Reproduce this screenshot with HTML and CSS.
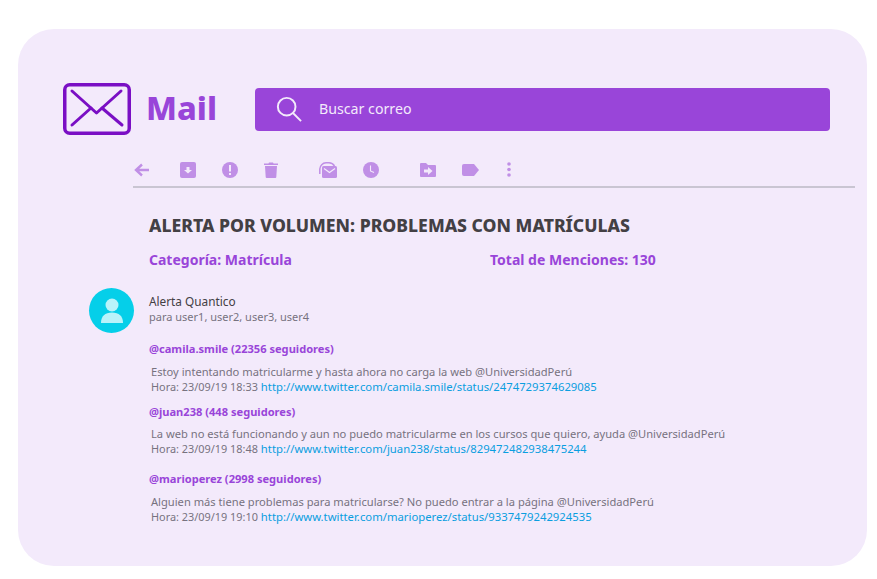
FILE: index.html
```html
<!DOCTYPE html>
<html lang="en">
<head>
    <meta charset="UTF-8">
    <title>Mail</title>
    <link rel="stylesheet" href="styles.css">
</head>
<body>
    <div class="card">
        <header class="top">
            <svg class="logo" width="68" height="52" viewBox="0 0 68 52" fill="none" stroke="#7a0fc4" stroke-width="3" stroke-linecap="round" stroke-linejoin="round">
                <rect x="1.750" y="1.750" width="64.500" height="48.500" rx="5" stroke-width="3.500"/>
                <path d="M9 8 L33.500 30 L58 8"/>
                <path d="M9 42 L28 25"/>
                <path d="M59 42 L39 25"/>
            </svg>
            <div class="brand">Mail</div>
            <div class="search">
                <svg width="26" height="26" viewBox="0 0 28 28" fill="none" stroke="#f3eafb" stroke-width="2.100">
                    <circle cx="11.5" cy="11.5" r="9.500"/>
                    <path d="M18 18 L27 27"/>
                </svg>
                <span>Buscar correo</span>
            </div>
        </header>

        <nav class="toolbar">
            <svg class="back" width="16" height="14" viewBox="0 0 16 14"><path d="M15 7H3M8 1.500L2 7l6 5.500" fill="none" stroke="#c08fe6" stroke-width="2.400"/></svg>
            <svg class="ic-archive" width="16" height="16" viewBox="0 0 16 16"><rect width="16" height="16" rx="2" fill="#c08fe6"/><path d="M6.500 5h3v3H12l-4 3.500L4 8h2.500z" fill="#f3eafb"/></svg>
            <svg class="ic-alert" width="16" height="16" viewBox="0 0 16 16"><circle cx="8" cy="8" r="8" fill="#c08fe6"/><path d="M7 3h2v6.500H7zM7 11h2v2H7z" fill="#f3eafb"/></svg>
            <svg class="ic-trash" width="14" height="16" viewBox="0 0 14 16"><path d="M0 1.500h4.500L5 .500h4l.5 1H14V3H0zM1 4h12l-.7 11a1 1 0 0 1-1 1H2.700a1 1 0 0 1-1-1z" fill="#c08fe6"/></svg>
            <svg class="ic-read" width="18" height="16" viewBox="0 0 18 16"><path d="M.8 12V7A6.500 6.500 0 0 1 7 .8h3A6.500 6.500 0 0 1 15.500 4" fill="none" stroke="#c08fe6" stroke-width="1.500"/><rect x="3" y="4" width="15" height="12" rx="1.500" fill="#c08fe6"/><path d="M5 6.500l5.500 4 5.500-4" fill="none" stroke="#f3eafb" stroke-width="1.200"/></svg>
            <svg class="ic-clock" width="16" height="16" viewBox="0 0 16 16"><circle cx="8" cy="8" r="8" fill="#c08fe6"/><path d="M7.500 3.500V9l3.500 1.500" fill="none" stroke="#f3eafb" stroke-width="1.100"/></svg>
            <svg class="ic-move" width="16" height="14" viewBox="0 0 16 14"><path d="M0 1a1 1 0 0 1 1-1h5l2 2h7a1 1 0 0 1 1 1v10a1 1 0 0 1-1 1H1a1 1 0 0 1-1-1z" fill="#c08fe6"/><path d="M4 6.500h4V4l4.500 4L8 12V9.500H4z" fill="#f3eafb"/></svg>
            <svg class="ic-label" width="17" height="12" viewBox="0 0 17 12"><path d="M2 0h10l5 6-5 6H2a2 2 0 0 1-2-2V2a2 2 0 0 1 2-2z" fill="#c08fe6"/></svg>
            <svg class="ic-more" width="4" height="15" viewBox="0 0 4 15"><circle cx="2" cy="2" r="1.800" fill="#c08fe6"/><circle cx="2" cy="7.500" r="1.800" fill="#c08fe6"/><circle cx="2" cy="13" r="1.800" fill="#c08fe6"/></svg>
        </nav>

        <main class="message">
            <h1>ALERTA POR VOLUMEN: PROBLEMAS CON MATRÍCULAS</h1>
            <div class="meta">
                <span class="meta-cat">Categoría: Matrícula</span>
                <span>Total de Menciones: 130</span>
            </div>

            <div class="sender">
                <div class="avatar">
                    <svg width="24" height="26" viewBox="0 0 24 26" fill="#b9f3fa">
                        <circle cx="12" cy="7" r="6.500"/>
                        <path d="M1 25c0-7 4-10.500 11-10.500S23 18 23 25z"/>
                    </svg>
                </div>
                <div>
                    <div class="sender-name">Alerta Quantico</div>
                    <div class="sender-to">para user1, user2, user3, user4</div>
                </div>
            </div>

            <section class="mention first">
                <h2>@camila.smile (22356 seguidores)</h2>
                <p>Estoy intentando matricularme y hasta ahora no carga la web @UniversidadPerú<br>
                <span class="time">Hora: 23/09/19 18:33</span> <a href="#">http://www.twitter.com/camila.smile/status/2474729374629085</a></p>
            </section>
            <section class="mention second">
                <h2>@juan238 (448 seguidores)</h2>
                <p>La web no está funcionando y aun no puedo matricularme en los cursos que quiero, ayuda @UniversidadPerú<br>
                <span class="time">Hora: 23/09/19 18:48</span> <a href="#">http://www.twitter.com/juan238/status/829472482938475244</a></p>
            </section>
            <section class="mention last">
                <h2>@marioperez (2998 seguidores)</h2>
                <p>Alguien más tiene problemas para matricularse? No puedo entrar a la página @UniversidadPerú<br>
                <span class="time">Hora: 23/09/19 19:10</span> <a href="#">http://www.twitter.com/marioperez/status/9337479242924535</a></p>
            </section>
        </main>
    </div>
</body>
</html>
```

FILE: styles.css
```css
* {
    box-sizing: border-box;
}

body {
    margin: 0;
    background: #fff;
    font-family: "Noto Sans", sans-serif;
}

.card {
    width: 849px;
    height: 537px;
    margin: 29px 0 0 18px;
    padding: 54px 12px 0 45px;
    background: #f3eafb;
    border-radius: 36px;
}

.top {
    display: flex;
    align-items: center;
    padding-right: 25px;
}

.brand {
    margin: -3px 0 0 15px;
    width: 109px;
    font-size: 32.500px;
    font-weight: 800;
    color: #9945d9;
}

.search {
    flex: 1;
    height: 43px;
    display: flex;
    align-items: center;
    gap: 17px;
    padding-left: 21px;
    background: #9945d9;
    border-radius: 4px;
    color: #f3eafb;
    font-size: 14.200px;
}

.search span {
    margin-top: -2px;
}

.toolbar {
    display: flex;
    align-items: center;
    height: 35px;
    margin: 18px 0 0 70px;
    padding-left: 1px;
    border-bottom: 2px solid #c9c5d2;
}

.back { margin-right: 30px; }
.ic-archive { margin-right: 26px; }
.ic-alert { margin-right: 26px; }
.ic-trash { margin-right: 41px; }
.ic-read { margin-right: 26px; }
.ic-clock { margin-right: 41px; }
.ic-move { margin-right: 26px; }
.ic-label { margin-right: 28px; }

.message {
    margin-left: 26px;
}

h1 {
    margin: 24px 0 0 60px;
    font-size: 17.600px;
    font-weight: 800;
    line-height: 26px;
    color: #434044;
}

.meta {
    display: flex;
    margin: 11px 0 0 60px;
    font-size: 14px;
    font-weight: 700;
    line-height: 22px;
    color: #9945d9;
}

.meta-cat {
    width: 341px;
}

.sender {
    display: flex;
    align-items: center;
    gap: 15px;
    margin-top: 17px;
}

.sender > div:last-child {
    margin-top: -3px;
}

.avatar {
    width: 45px;
    height: 45px;
    display: flex;
    align-items: flex-end;
    justify-content: center;
    padding-bottom: 9px;
    background: #05cfe9;
    border-radius: 50%;
}

.sender-name {
    font-size: 11.800px;
    line-height: 15px;
    color: #434044;
}

.sender-to {
    font-size: 11px;
    line-height: 15px;
    color: #77727f;
}

.mention {
    margin-left: 60px;
}

.mention h2 {
    margin: 0;
    font-size: 11.100px;
    font-weight: 700;
    line-height: 16px;
    color: #9945d9;
}

.mention p {
    margin: 6.500px 0 0 2px;
    font-size: 11.150px;
    line-height: 15px;
    color: #77727f;
}

.time {
    font-size: 10.900px;
}

.mention a {
    font-size: 11.300px;
    color: #0a9ee0;
    text-decoration: none;
}

.first { margin-top: 8px; }
.second { margin-top: 10px; }
.last { margin-top: 15px; }
```
